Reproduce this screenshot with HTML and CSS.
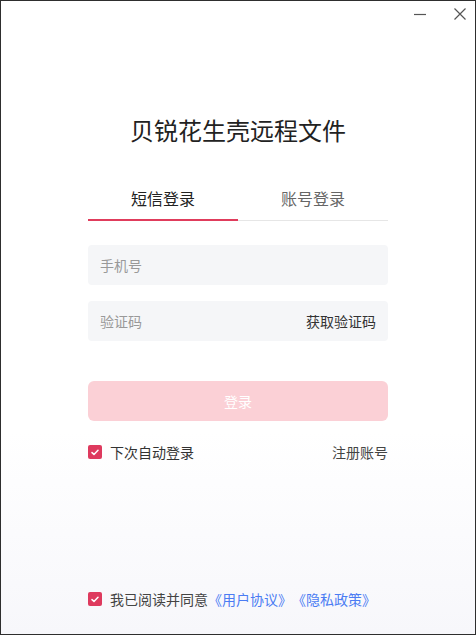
FILE: index.html
```html
<!DOCTYPE html>
<html lang="zh">
<head>
<meta charset="utf-8">
<link rel="stylesheet" href="styles.css">
</head>
<body>
<div class="window">
  <div class="titlebar">
    <button class="ctrl min" aria-label="最小化">
      <svg width="14" height="14" viewBox="0 0 14 14"><path d="M1 7.5H13" stroke="#555" stroke-width="1.2" fill="none"/></svg>
    </button>
    <button class="ctrl close" aria-label="关闭">
      <svg width="14" height="14" viewBox="0 0 14 14"><path d="M1.5 1.5L12.5 12.5M12.5 1.5L1.5 12.5" stroke="#555" stroke-width="1.2" fill="none"/></svg>
    </button>
  </div>
  <div class="content">
    <h1 class="title">贝锐花生壳远程文件</h1>
    <div class="tabs">
      <div class="tab active">短信登录</div>
      <div class="tab">账号登录</div>
    </div>
    <div class="field"><span class="ph">手机号</span></div>
    <div class="field"><span class="ph">验证码</span><span class="getcode">获取验证码</span></div>
    <button class="login">登录</button>
    <div class="row">
      <label class="check"><span class="box"><svg width="8" height="7" viewBox="0 0 8 7"><path d="M1 3.6L3 5.4L7 1.2" stroke="#fff" stroke-width="1.5" fill="none" stroke-linecap="round" stroke-linejoin="round"/></svg></span>下次自动登录</label>
      <span class="register">注册账号</span>
    </div>
    <div class="spacer"></div>
    <div class="agree">
      <span class="box"><svg width="8" height="7" viewBox="0 0 8 7"><path d="M1 3.6L3 5.4L7 1.2" stroke="#fff" stroke-width="1.5" fill="none" stroke-linecap="round" stroke-linejoin="round"/></svg></span>
      <span>我已阅读并同意</span><a class="link">《用户协议》</a><a class="link">《隐私政策》</a>
    </div>
  </div>
</div>
</body>
</html>
```

FILE: styles.css
```css
* { box-sizing: border-box; }
html, body { margin: 0; padding: 0; }
body {
  width: 476px;
  height: 635px;
  font-family: "Noto Sans CJK SC", "Noto Sans", sans-serif;
  color: #333;
}
.window {
  width: 476px;
  height: 635px;
  border: 1px solid #2e2e2e;
  background: linear-gradient(to bottom, #ffffff 0%, #ffffff 68%, #f7f7fb 100%);
  display: flex;
  flex-direction: column;
}
.titlebar {
  height: 30px;
  display: flex;
  justify-content: flex-end;
  align-items: flex-start;
  padding: 6px 8px 0 0;
  gap: 16px;
}
.ctrl {
  border: 0;
  background: none;
  padding: 0;
  width: 14px;
  height: 14px;
  display: flex;
}
.ctrl.min { margin-right: 10px; }
.content {
  flex: 1;
  display: flex;
  flex-direction: column;
  padding: 0 87px 25px 87px;
}
.title {
  margin: 82px 0 0 0;
  font-size: 24px;
  font-weight: 400;
  line-height: 34px;
  text-align: center;
  color: #222;
}
.tabs {
  margin-top: 40px;
  display: flex;
  border-bottom: 1px solid #e6e6e6;
}
.tab {
  flex: 1;
  text-align: center;
  font-size: 16px;
  line-height: 22px;
  padding-bottom: 10px;
  color: #666;
  margin-bottom: -1px;
  border-bottom: 2px solid transparent;
}
.tab.active {
  color: #222;
  border-bottom-color: #e03c5c;
}
.field {
  margin-top: 24px;
  height: 40px;
  background: #f5f6f8;
  border-radius: 4px;
  display: flex;
  align-items: center;
  justify-content: space-between;
  padding: 0 12px;
  font-size: 14px;
}
.field + .field { margin-top: 16px; }
.ph { color: #999; }
.getcode { color: #333; }
.login {
  margin-top: 40px;
  height: 40px;
  border: 0;
  border-radius: 6px;
  background: #fbd0d6;
  color: #fff;
  font-family: inherit;
  font-size: 14px;
}
.row {
  margin-top: 21px;
  display: flex;
  justify-content: space-between;
  align-items: center;
  font-size: 14px;
  line-height: 20px;
}
.check {
  display: flex;
  align-items: center;
  gap: 8px;
  color: #333;
}
.register { color: #444; }
.box {
  width: 14px;
  height: 14px;
  border-radius: 2px;
  background: #de3a5e;
  display: inline-flex;
  align-items: center;
  justify-content: center;
  flex: none;
}
.spacer { flex: 1; }
.agree {
  display: flex;
  align-items: center;
  font-size: 14px;
  line-height: 20px;
  color: #444;
}
.agree .box { margin-right: 8px; }
.link { color: #4b7cf3; }
```
